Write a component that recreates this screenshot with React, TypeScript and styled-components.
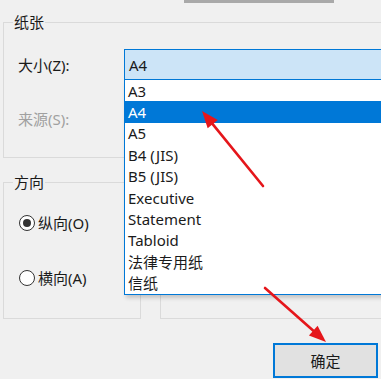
import React from "react";
import styled, { createGlobalStyle } from "styled-components";

const GlobalStyle = createGlobalStyle`
  html, body { margin: 0; padding: 0; background: #f0f0f0; }
  body { font-family: "Noto Sans", "Noto Sans CJK SC", sans-serif; }
`;

const Page = styled.div`
  position: relative;
  width: 381px;
  height: 379px;
  overflow: hidden;
  background: #f0f0f0;
  display: flex;
  flex-direction: column;
  font-size: 15px;
  color: #1a1a1a;
`;

const TopStrip = styled.div`
  height: 3px;
  padding-left: 184px;
  display: flex;
`;

const TopBar = styled.div`
  width: 150px;
  height: 3px;
  background: #a9a9a9;
`;

const Group = styled.div<{ $w: number; $h: number; $mt?: number; $ml?: number }>`
  position: relative;
  box-sizing: border-box;
  flex: none;
  width: ${(p) => p.$w}px;
  height: ${(p) => p.$h}px;
  margin-top: ${(p) => p.$mt ?? 0}px;
  margin-left: ${(p) => p.$ml ?? 0}px;
  border: 1px solid #dadada;
  display: flex;
  flex-direction: column;
`;

const Legend = styled.span`
  position: absolute;
  top: -11px;
  left: 9px;
  line-height: 20px;
  padding: 0 1px;
  background: #f0f0f0;
  color: #1a1a1a;
`;

const PaperBody = styled.div`
  display: grid;
  grid-template-columns: 106px 1fr;
  grid-template-rows: 31px 31px;
  row-gap: 23px;
  padding: 26px 0 0 14px;
  align-items: center;
`;

const FieldLabel = styled.span<{ $disabled?: boolean }>`
  color: ${(p) => (p.$disabled ? "#a0a0a0" : "#1a1a1a")};
  line-height: 20px;
`;

const ComboWrap = styled.div`
  position: relative;
  height: 31px;
`;

const Combo = styled.div`
  box-sizing: border-box;
  height: 31px;
  width: 300px;
  border: 1px solid #0078d7;
  background: #cce4f7;
  display: flex;
  align-items: center;
  padding-left: 4px;
  line-height: 20px;
`;

const DropList = styled.ul`
  position: absolute;
  top: 31px;
  left: 0;
  width: 300px;
  margin: 0;
  padding: 0;
  list-style: none;
  box-sizing: border-box;
  background: #ffffff;
  border: 1px solid #0078d7;
  border-top: none;
  box-shadow: 2px 3px 4px rgba(0, 0, 0, 0.18);
  z-index: 2;
`;

const DropItem = styled.li<{ $selected?: boolean }>`
  height: 21.4px;
  display: flex;
  align-items: center;
  padding-left: 3px;
  line-height: 20px;
  background: ${(p) => (p.$selected ? "#0078d7" : "transparent")};
  color: ${(p) => (p.$selected ? "#ffffff" : "#1a1a1a")};
`;

const LowerRow = styled.div`
  display: flex;
  margin-top: 24px;
  margin-left: 3px;
  gap: 19px;
`;

const RadioList = styled.div`
  display: flex;
  flex-direction: column;
  gap: 33px;
  padding: 29px 0 0 15px;
`;

const RadioRow = styled.label`
  display: flex;
  align-items: center;
  height: 22px;
  gap: 3px;
  line-height: 20px;
`;

const RadioCircle = styled.span<{ $checked?: boolean }>`
  box-sizing: border-box;
  width: 16px;
  height: 16px;
  border-radius: 50%;
  border: 1.5px solid #333333;
  background: #ffffff;
  display: flex;
  align-items: center;
  justify-content: center;
  &::after {
    content: "";
    width: 8px;
    height: 8px;
    border-radius: 50%;
    background: ${(p) => (p.$checked ? "#333333" : "transparent")};
  }
`;

const ButtonRow = styled.div`
  display: flex;
  justify-content: flex-end;
  padding-right: 3px;
  margin-top: 24px;
`;

const OkButton = styled.button`
  box-sizing: border-box;
  width: 105px;
  height: 35px;
  border: 2px solid #0078d7;
  background: #e1e1e1;
  font-family: "Noto Sans CJK SC", "Noto Sans", sans-serif;
  font-size: 15px;
  color: #1a1a1a;
  padding: 0;
`;

const Overlay = styled.svg`
  position: absolute;
  left: 0;
  top: 0;
  pointer-events: none;
  z-index: 5;
`;

type ArrowProps = { x1: number; y1: number; x2: number; y2: number };

const Arrow: React.FC<ArrowProps> = ({ x1, y1, x2, y2 }) => {
  const dx = x2 - x1;
  const dy = y2 - y1;
  const len = Math.hypot(dx, dy);
  const ux = dx / len;
  const uy = dy / len;
  const hl = 17;
  const hw = 6.5;
  const bx = x2 - ux * hl;
  const by = y2 - uy * hl;
  const px = -uy;
  const py = ux;
  const pts = `${x2},${y2} ${bx + px * hw},${by + py * hw} ${bx - px * hw},${by - py * hw}`;
  return (
    <g>
      <line x1={x1} y1={y1} x2={bx + ux * 2} y2={by + uy * 2} stroke="#e5161b" strokeWidth={2.6} strokeLinecap="round" />
      <polygon points={pts} fill="#e5161b" />
    </g>
  );
};

const sizes = ["A3", "A4", "A5", "B4 (JIS)", "B5 (JIS)", "Executive", "Statement", "Tabloid", "法律专用纸", "信纸"];

export default function App() {
  return (
    <>
      <GlobalStyle />
      <Page>
        <TopStrip>
          <TopBar />
        </TopStrip>
        <Group $w={420} $h={136} $mt={19} $ml={3}>
          <Legend>纸张</Legend>
          <PaperBody>
            <FieldLabel>大小(Z):</FieldLabel>
            <ComboWrap>
              <Combo>A4</Combo>
              <DropList>
                {sizes.map((s) => (
                  <DropItem key={s} $selected={s === "A4"}>
                    {s}
                  </DropItem>
                ))}
              </DropList>
            </ComboWrap>
            <FieldLabel $disabled>来源(S):</FieldLabel>
            <div />
          </PaperBody>
        </Group>
        <LowerRow>
          <Group $w={138} $h={137}>
            <Legend>方向</Legend>
            <RadioList>
              <RadioRow>
                <RadioCircle $checked />
                纵向(O)
              </RadioRow>
              <RadioRow>
                <RadioCircle />
                横向(A)
              </RadioRow>
            </RadioList>
          </Group>
          <Group $w={260} $h={137} />
        </LowerRow>
        <ButtonRow>
          <OkButton>确定</OkButton>
        </ButtonRow>
        <Overlay width={381} height={379} viewBox="0 0 381 379">
          <Arrow x1={263} y1={186} x2={202} y2={111} />
          <Arrow x1={265} y1={288} x2={326} y2={342} />
        </Overlay>
      </Page>
    </>
  );
}
